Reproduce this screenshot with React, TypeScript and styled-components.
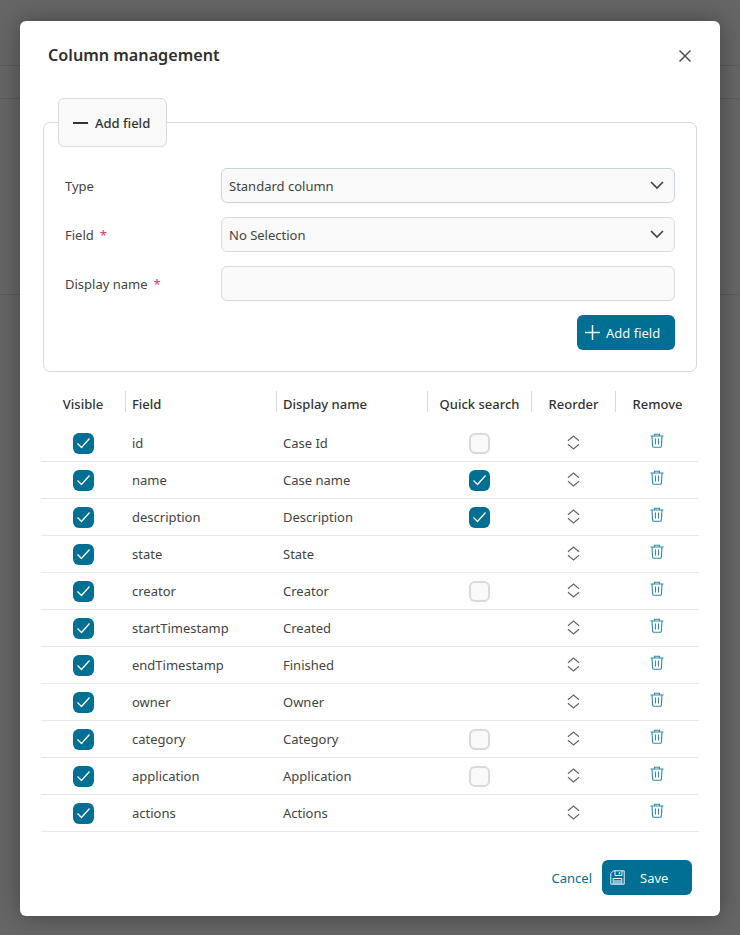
import React from "react";
import styled, { createGlobalStyle } from "styled-components";

const Global = createGlobalStyle`
  html, body { margin: 0; padding: 0; }
  body { font-family: "Noto Sans", "Open Sans", "Liberation Sans", sans-serif; color: #333; }
  * { box-sizing: border-box; }
`;

const Backdrop = styled.div`
  width: 740px;
  height: 935px;
  overflow: hidden;
  display: flex;
  justify-content: center;
  align-items: flex-start;
  padding-top: 21px;
  background-color: #666;
  background-image:
    linear-gradient(#5c5c5c, #5c5c5c),
    linear-gradient(#5c5c5c, #5c5c5c),
    linear-gradient(#5c5c5c, #5c5c5c);
  background-size: 100% 1px;
  background-repeat: no-repeat;
  background-position: 0 65px, 0 98px, 0 294px;
`;

const Modal = styled.section`
  width: 700px;
  height: 895px;
  background: #fff;
  border-radius: 6px;
  display: flex;
  flex-direction: column;
  box-shadow: 0 0 24px rgba(0, 0, 0, 0.35);
  padding-bottom: 21px;
`;

const Header = styled.header`
  height: 77px;
  flex: none;
  display: flex;
  justify-content: space-between;
  align-items: flex-start;
  padding: 21px 28px 0 28px;
`;

const Title = styled.h2`
  margin: 0;
  font-size: 16.2px;
  line-height: 26px;
  font-weight: 600;
  color: #2f2f2f;
`;

const CloseButton = styled.button`
  border: 0;
  background: none;
  padding: 0;
  width: 14px;
  height: 14px;
  margin-top: 7px;
  display: flex;
  color: #444;
`;

const FieldBox = styled.fieldset`
  margin: 0 23px;
  padding: 0 21px 21px;
  border: 1px solid #d8dadb;
  border-radius: 7px;
  min-width: 0;
`;

const Legend = styled.legend`
  margin-left: -7px;
  padding: 0;
`;

const Toggle = styled.button`
  width: 109px;
  height: 49px;
  display: flex;
  align-items: center;
  gap: 7px;
  padding: 0 0 0 14px;
  background: #f9f9f9;
  border: 1px solid #d8dadb;
  border-radius: 6px;
  font: 500 13px "Noto Sans", sans-serif;
  color: #333;
`;

const FormRows = styled.div`
  margin-top: 21px;
  display: flex;
  flex-direction: column;
  gap: 14px;
`;

const FormRow = styled.div`
  display: grid;
  grid-template-columns: 156px 454px;
  align-items: center;
`;

const Label = styled.label`
  font-size: 13px;
  color: #444;
`;

const Required = styled.span`
  color: #e8336d;
  margin-left: 6px;
`;

const Control = styled.div<{ $focus?: boolean }>`
  height: 35px;
  display: flex;
  align-items: center;
  justify-content: space-between;
  padding: 0 10px 0 7px;
  background: #f9f9f9;
  border: 1px solid ${(p) => (p.$focus ? "#c5d5da" : "#d8dadb")};
  border-radius: 6px;
  font-size: 13px;
  color: #444;

  svg {
    margin-bottom: 1px;
  }
`;

const FormActions = styled.div`
  display: flex;
  justify-content: flex-end;
  margin-top: 14px;
`;

const PrimaryButton = styled.button<{ $w: number; $gap: number; $pl: number }>`
  width: ${(p) => p.$w}px;
  height: 35px;
  display: flex;
  align-items: center;
  gap: ${(p) => p.$gap}px;
  padding: 0 0 0 ${(p) => p.$pl}px;
  border: 0;
  border-radius: 6px;
  background: #006f94;
  color: #f2f7f9;
  font: 400 13px "Noto Sans", sans-serif;
`;

const Table = styled.div`
  margin: 19px 21px 0;
  display: flex;
  flex-direction: column;
`;

const Cols = styled.div`
  display: grid;
  grid-template-columns: 84px 151px 151px 104px 84px 84px;
`;

const HeadRow = styled(Cols)`
  height: 21px;
  margin-bottom: 13px;
`;

const HeadCell = styled.div<{ $center?: boolean; $first?: boolean }>`
  border-left: ${(p) => (p.$first ? "0" : "1px solid #d8dadb")};
  padding-left: ${(p) => (p.$center ? 0 : 6)}px;
  text-align: ${(p) => (p.$center ? "center" : "left")};
  font-size: 13px;
  font-weight: 500;
  line-height: 27px;
  height: 21px;
  color: #333;
`;

const Row = styled(Cols)`
  height: 37px;
  border-bottom: 1px solid #e8e8e8;
  align-items: center;
  font-size: 13px;
  color: #444;
`;

const TextCell = styled.div`
  padding-left: 7px;
`;

const CenterCell = styled.div<{ $lift?: number }>`
  display: flex;
  justify-content: center;
  align-items: center;
  margin-bottom: ${(p) => p.$lift ?? 0}px;
`;

const Check = styled.span<{ $on: boolean }>`
  width: 21px;
  height: 21px;
  border-radius: 6px;
  display: flex;
  align-items: center;
  justify-content: center;
  background: ${(p) => (p.$on ? "#006f94" : "#f9f9f9")};
  border: ${(p) => (p.$on ? "0" : "2px solid #d8dadb")};
`;

const Footer = styled.footer`
  margin-top: auto;
  display: flex;
  justify-content: flex-end;
  align-items: center;
  gap: 10px;
  padding-right: 28px;
`;

const Cancel = styled.button`
  border: 0;
  background: none;
  padding: 0;
  color: #006f94;
  font: 400 13px "Noto Sans", sans-serif;
`;

const CheckIcon = () => (
  <svg width="15" height="12" viewBox="0 0 15 12" fill="none" stroke="#fff" strokeWidth="1.3">
    <path d="M1.5 6.5 5.5 10.5 13.5 1.5" />
  </svg>
);

const ReorderIcon = () => (
  <svg width="13" height="15" viewBox="0 0 13 15" fill="none" stroke="#666" strokeWidth="1.2">
    <path d="M1 5.8 6.5 1 12 5.8M1 9.2 6.5 14 12 9.2" />
  </svg>
);

const TrashIcon = () => (
  <svg width="14" height="15" viewBox="0 0 14 15" fill="none" stroke="#2e8aa8" strokeWidth="1.1">
    <path d="M.5 3h13M4.5 3V1.2h5V3M2 3l.6 10a1.2 1.2 0 0 0 1.2 1.2h6.4a1.2 1.2 0 0 0 1.2-1.2L12 3M5.5 5.5v6M8.5 5.5v6" />
  </svg>
);

const SaveIcon = () => (
  <svg width="15" height="15" viewBox="0 0 15 15" fill="none" stroke="#eef5f8" strokeWidth="1">
    <path d="M3.5 .8H14.2V14.2H.8V3.5z" />
    <path d="M5 1v4.5h7V1" />
    <path d="M9.5 2.2v2" strokeWidth="1.4" />
    <path d="M3.2 14V8.5h8.6V14" />
    <path d="M4 10h7v4H4z" fill="#eef5f8" fillOpacity=".55" stroke="none" />
  </svg>
);

const Chevron = () => (
  <svg width="14" height="8" viewBox="0 0 14 8" fill="none" stroke="#444" strokeWidth="1.7">
    <path d="M1 1 7 7 13 1" />
  </svg>
);

const rows: [string, string, boolean | null][] = [
  ["id", "Case Id", false],
  ["name", "Case name", true],
  ["description", "Description", true],
  ["state", "State", null],
  ["creator", "Creator", false],
  ["startTimestamp", "Created", null],
  ["endTimestamp", "Finished", null],
  ["owner", "Owner", null],
  ["category", "Category", false],
  ["application", "Application", false],
  ["actions", "Actions", null],
];

export default function App() {
  return (
    <Backdrop>
      <Global />
      <Modal>
        <Header>
          <Title>Column management</Title>
          <CloseButton aria-label="Close">
            <svg width="14" height="14" viewBox="0 0 14 14" fill="none" stroke="#444" strokeWidth="1.4">
              <path d="M1.5 1.5 12.5 12.5M12.5 1.5 1.5 12.5" />
            </svg>
          </CloseButton>
        </Header>
        <FieldBox>
          <Legend>
            <Toggle>
              <svg width="15" height="2" viewBox="0 0 15 2"><path d="M0 1h15" stroke="#333" strokeWidth="2" /></svg>
              Add field
            </Toggle>
          </Legend>
          <FormRows>
            <FormRow>
              <Label>Type</Label>
              <Control $focus>Standard column<Chevron /></Control>
            </FormRow>
            <FormRow>
              <Label>Field<Required>*</Required></Label>
              <Control>No Selection<Chevron /></Control>
            </FormRow>
            <FormRow>
              <Label>Display name<Required>*</Required></Label>
              <Control />
            </FormRow>
          </FormRows>
          <FormActions>
            <PrimaryButton $w={98} $gap={6} $pl={8}>
              <svg width="15" height="15" viewBox="0 0 15 15"><path d="M7.5 0v15M0 7.5h15" stroke="#eef5f8" strokeWidth="1.5" /></svg>
              Add field
            </PrimaryButton>
          </FormActions>
        </FieldBox>
        <Table>
          <HeadRow>
            <HeadCell $center $first>Visible</HeadCell>
            <HeadCell>Field</HeadCell>
            <HeadCell>Display name</HeadCell>
            <HeadCell $center>Quick search</HeadCell>
            <HeadCell $center>Reorder</HeadCell>
            <HeadCell $center>Remove</HeadCell>
          </HeadRow>
          {rows.map(([field, name, quick]) => (
            <Row key={field}>
              <CenterCell><Check $on><CheckIcon /></Check></CenterCell>
              <TextCell>{field}</TextCell>
              <TextCell>{name}</TextCell>
              <CenterCell>
                {quick !== null && <Check $on={quick}>{quick && <CheckIcon />}</Check>}
              </CenterCell>
              <CenterCell $lift={1}><ReorderIcon /></CenterCell>
              <CenterCell $lift={6}><TrashIcon /></CenterCell>
            </Row>
          ))}
        </Table>
        <Footer>
          <Cancel>Cancel</Cancel>
          <PrimaryButton $w={90} $gap={15} $pl={8}>
            <SaveIcon />
            Save
          </PrimaryButton>
        </Footer>
      </Modal>
    </Backdrop>
  );
}
